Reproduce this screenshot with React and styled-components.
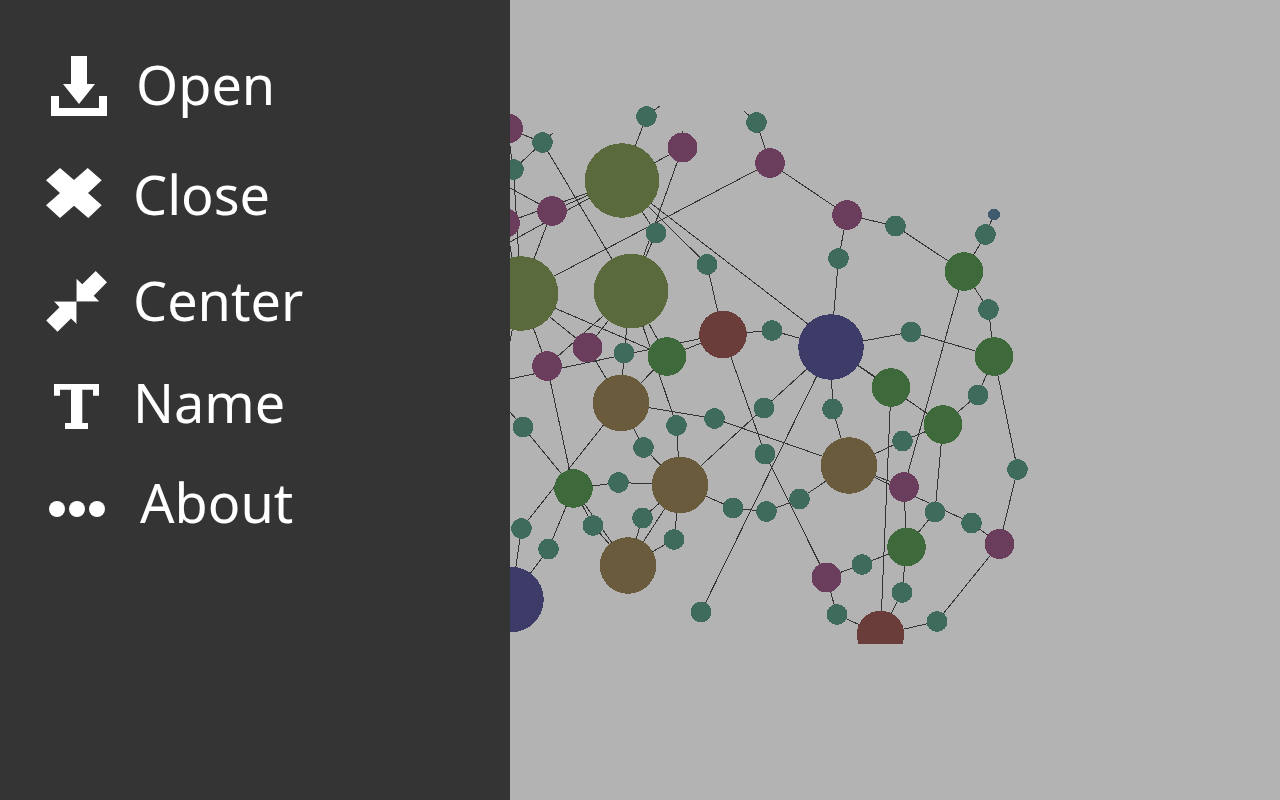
import React from "react";
import styled, { createGlobalStyle } from "styled-components";

const GlobalStyle = createGlobalStyle`
  *, *::before, *::after { box-sizing: border-box; }
  body {
    margin: 0;
    background: #b3b3b3;
    font-family: "Noto Sans", "Open Sans", sans-serif;
  }
`;

const Shell = styled.div`
  display: flex;
  min-height: 100vh;
  overflow: hidden;
`;

const Sidebar = styled.nav`
  flex: 0 0 510px;
  background: #343434;
`;

const MenuList = styled.ul`
  display: grid;
  grid-template-rows: 112px 108px 104px 100px 100px;
  margin: 0;
  padding: 28px 44px 0;
  list-style: none;
`;

const MenuItem = styled.li`
  display: flex;
`;

const MenuButton = styled.button`
  display: flex;
  flex: 1;
  align-items: center;
  gap: ${({ $gap }) => $gap}px;
  padding: 0;
  border: 0;
  background: none;
  color: #ffffff;
  font: inherit;
  font-size: 54px;
  line-height: 72px;
  text-align: left;
  cursor: pointer;
`;

const Icon = styled.svg`
  flex: none;
  width: 64px;
  height: 64px;
  fill: currentColor;
`;

const Canvas = styled.main`
  flex: 1;
  min-width: 0;
  overflow: hidden;
  background: #b3b3b3;
`;

const Graph = styled.svg`
  display: block;
  shape-rendering: crispEdges;
`;

const Edge = styled.line`
  stroke: #333333;
  stroke-width: 1px;
`;

const KINDS = {
  dot: { r: 6, fill: "#3f5c6e" },
  teal: { r: 10.4, fill: "#3f6b5c" },
  purple: { r: 14.9, fill: "#693d5b" },
  green: { r: 19.3, fill: "#3d693b" },
  red: { r: 23.8, fill: "#6a3d3b" },
  brown: { r: 28.3, fill: "#695b3b" },
  navy: { r: 32.8, fill: "#3d3c69" },
  olive: { r: 37.3, fill: "#5b6a3c" },
};

const NODES = {
  t1: ["teal", 646.5, 116.5], t2: ["teal", 542.5, 142.5], t3: ["teal", 513.5, 169.5],
  t4: ["teal", 656, 233], t5: ["teal", 707, 264.5], t6: ["teal", 756.5, 122.5],
  t7: ["teal", 838.5, 258.5], t8: ["teal", 895.5, 226], t9: ["teal", 985.5, 234.5],
  t10: ["teal", 988.5, 309.5], t11: ["teal", 911, 332], t12: ["teal", 772, 330.5],
  t13: ["teal", 624, 353], t14: ["teal", 764, 408], t15: ["teal", 832.5, 409],
  t16: ["teal", 714.5, 418.5], t17: ["teal", 676.5, 425.5], t18: ["teal", 643.5, 447.5],
  t19: ["teal", 765, 454], t20: ["teal", 618.5, 482.5], t21: ["teal", 523, 427],
  t22: ["teal", 521.5, 528.5], t23: ["teal", 548.5, 549], t24: ["teal", 593, 525.5],
  t25: ["teal", 642.5, 518], t26: ["teal", 674, 539.5], t27: ["teal", 733, 508],
  t28: ["teal", 766.5, 511.5], t29: ["teal", 799.5, 499], t30: ["teal", 978, 395],
  t31: ["teal", 902.5, 441], t32: ["teal", 1017.5, 469.5], t33: ["teal", 935, 512],
  t34: ["teal", 971.5, 523], t35: ["teal", 862, 564.5], t36: ["teal", 902, 592.5],
  t37: ["teal", 837, 614.5], t38: ["teal", 937, 621.5], t39: ["teal", 701, 612],
  d1: ["dot", 994, 214.5],
  p1: ["purple", 508, 128.5], p2: ["purple", 552, 211], p3: ["purple", 505, 223],
  p4: ["purple", 682.5, 147.5], p5: ["purple", 770, 163], p6: ["purple", 847, 215],
  p7: ["purple", 587.5, 347.5], p8: ["purple", 547, 366], p9: ["purple", 904, 487],
  p10: ["purple", 999.5, 544], p11: ["purple", 826.5, 577.5],
  g1: ["green", 667, 356.5], g2: ["green", 573.5, 488.5], g3: ["green", 964, 271.5],
  g4: ["green", 994, 356.5], g5: ["green", 891, 387.5], g6: ["green", 943, 424.5],
  g7: ["green", 906.5, 547],
  r1: ["red", 723, 334.5], r2: ["red", 880.5, 634.5],
  b1: ["brown", 621, 403], b2: ["brown", 680, 485], b3: ["brown", 628, 565.5],
  b4: ["brown", 849, 465.5],
  n1: ["navy", 831, 347], n2: ["navy", 511, 599.5],
  o1: ["olive", 622, 180.5], o2: ["olive", 521, 293.5], o3: ["olive", 631, 291],
};

const LINKS = `
  t1-o1 o1-p4 t2-t3 p1-t2 t2-o3 p3-o1 p2-o1 p2-o2 t3-o2 o2-p5 o1-t4 o1-t5
  p4-o3 t4-o3 t5-r1 t6-p5 p5-p6 p6-t8 p6-t7 t7-n1 t8-g3 g3-t9 t9-d1 g3-t10
  t10-g4 t11-g4 t11-n1 n1-t12 t12-r1 g3-p9 n1-g5 n1-g6 g5-r2 g4-t30 t30-g6
  g6-t31 t31-b4 g4-t32 t32-p10 g6-t33 b4-p9 b4-t34 t34-p10 p9-g7 t33-g7
  g7-t35 t35-p11 p11-t37 t37-r2 g7-t36 t36-r2 r2-t38 t38-p10 n1-t15 t15-b4
  n1-t14 t14-b2 n1-t39 r1-t19 t19-p11 t16-b1 t16-b4 t27-b2 t27-t28 t28-t29
  t29-b4 o3-p7 o3-p8 o2-p7 o2-g1 o2-p8 o3-t13 o3-g1 o3-t17 t13-b1 g1-r1
  g1-b1 p7-b1 b1-t18 t18-b2 t17-b2 p8-g2 t21-g2 g2-t20 t20-b2 b1-t22 t22-n2
  t23-g2 t23-n2 g2-t24 t24-b3 g2-b3 b2-t25 t25-b3 b2-b3 b2-t26 t26-b3
`.trim().split(/\s+/).map((pair) => {
  const [from, to] = pair.split("-");
  return [...NODES[from].slice(1), ...NODES[to].slice(1)];
});

// Links with one end outside the visible part of the graph.
const OPEN_LINKS = [
  [646, 116, 660, 106],
  [682, 147, 682, 131],
  [542, 142, 553, 133],
  [756, 122, 744, 111],
  [622, 181, 830, 341],
  [510, 242, 622, 180],
  [510, 188, 552, 211],
  [510, 146, 513, 169],
  [508, 235, 516, 280],
  [516, 310, 510, 341],
  [510, 379, 722, 334],
  [510, 412, 523, 427],
];

function GraphView() {
  return (
    <Graph
      width="770"
      height="800"
      viewBox="510 0 770 800"
      role="img"
      aria-label="Node graph"
    >
      <clipPath id="graph-area">
        <rect x="510" y="0" width="770" height="644" />
      </clipPath>
      <g clipPath="url(#graph-area)">
        {[...LINKS, ...OPEN_LINKS].map(([x1, y1, x2, y2], i) => (
          <Edge key={i} x1={x1} y1={y1} x2={x2} y2={y2} />
        ))}
        {Object.entries(NODES).map(([id, [kind, cx, cy]]) => (
          <circle key={id} cx={cx} cy={cy} r={KINDS[kind].r} fill={KINDS[kind].fill} />
        ))}
      </g>
    </Graph>
  );
}

const MENU = [
  {
    label: "Open",
    gap: 28,
    icon: (
      <path d="M27 4H43V32H51L35 52L19 32H27ZM7 44H15V56H55V44H63V64H7Z" />
    ),
  },
  {
    label: "Close",
    gap: 25,
    icon: (
      <path d="M16 6L30 18L43.7 6L57.7 18.3L44 31L57.7 43.3L44.3 56L30 43.7L16 56L2 43.3L16 31L2 18.3Z" />
    ),
  },
  {
    label: "Center",
    gap: 25,
    icon: (
      <>
        <path d="M51.7 3L63 14.3L49.7 27.7L55 33.3H32.7V11L38.3 16.3Z" />
        <path d="M13.5 63.8L2.2 52.5L15.5 39.2L10.2 33.5H32.5V55.8L27 50.5Z" />
        <path d="M32.5 11V56M10 33.5H55" fill="none" stroke="#8c8c8c" />
      </>
    ),
  },
  {
    label: "Name",
    gap: 25,
    icon: (
      <path d="M10 14H55V25.7H49V19.7H38.3V53H44V59H21V53H27V19.7H16V25.7H10Z" />
    ),
  },
  {
    label: "About",
    gap: 32,
    icon: (
      <>
        <circle cx="13" cy="39" r="8" />
        <circle cx="33" cy="39" r="8" />
        <circle cx="53" cy="39" r="8" />
      </>
    ),
  },
];

export default function App() {
  return (
    <>
      <GlobalStyle />
      <Shell>
        <Sidebar aria-label="Main menu">
          <MenuList>
            {MENU.map(({ label, gap, icon }) => (
              <MenuItem key={label}>
                <MenuButton type="button" $gap={gap}>
                  <Icon viewBox="0 0 64 64" aria-hidden="true">{icon}</Icon>
                  {label}
                </MenuButton>
              </MenuItem>
            ))}
          </MenuList>
        </Sidebar>
        <Canvas>
          <GraphView />
        </Canvas>
      </Shell>
    </>
  );
}
